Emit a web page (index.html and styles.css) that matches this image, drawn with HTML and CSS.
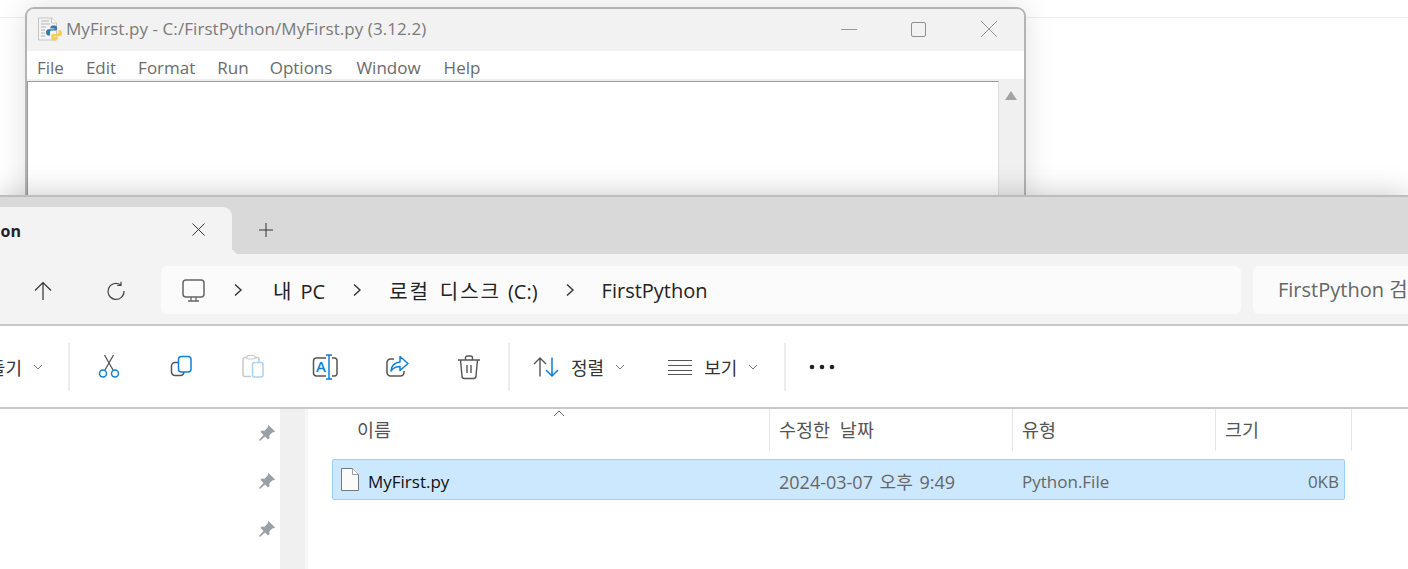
FILE: index.html
```html
<!DOCTYPE html>
<html lang="ko">
<head>
    <meta charset="UTF-8">
    <title>MyFirst.py</title>
    <link rel="stylesheet" href="styles.css">
</head>
<body>
    <div class="desk-line"></div>

    <!-- IDLE editor window, mostly hidden behind the explorer -->
    <div class="idle">
        <div class="idle-title">
            <svg class="idle-logo" width="26" height="24" viewBox="0 0 26 24">
                <path d="M1.500 1h13l5 5v17h-18z" fill="#f4f4f4" stroke="#c4c4c4"/>
                <path d="M14.500 1v5h5" fill="#fff" stroke="#c4c4c4"/>
                <path d="M4 4h8M4 7h9M4 10h5M4 13h4M4 16h4M4 19h4" stroke="#b4b4b4"/>
                <g transform="translate(3.500 2.500)">
                    <path d="M9.500 16v-3.500c0-1 .7-1.600 1.600-1.600h4.200c.8 0 1.300-.6 1.300-1.300V8.300c0-1.800-1.300-2.300-3.400-2.300-2.300 0-3.300.6-3.300 1.900V9H14v.7H8.200c-1.500 0-2.700 1-2.700 3 0 2.100 1 3.300 2.500 3.300z" fill="#3a76a8"/>
                    <path d="M10.800 17.500v1.300c0 1.500 1.300 2.200 3.200 2.200 2.200 0 3.300-.7 3.300-2V17.500H13.500v-.7h5.600c1.500 0 2.400-1.100 2.400-3s-.8-3.300-2.400-3.300H18v2.300c0 1-.7 1.700-1.700 1.700h-3.900c-.9 0-1.600.7-1.600 1.500z" fill="#f7cf4a"/>
                </g>
            </svg>
            <span class="idle-name">MyFirst.py - C:/FirstPython/MyFirst.py (3.12.2)</span>
            <div class="win-btns">
                <svg width="18" height="18" viewBox="0 0 18 18"><path d="M1 9.500h16" stroke="#9a9a9a" fill="none"/></svg>
                <svg width="18" height="18" viewBox="0 0 18 18"><rect x="1.500" y="2.500" width="14" height="14" rx="1.500" stroke="#8f8f8f" fill="none"/></svg>
                <svg width="18" height="18" viewBox="0 0 18 18"><path d="M1 1l16 16M17 1L1 17" stroke="#949494" fill="none"/></svg>
            </div>
        </div>
        <div class="idle-menu">
            <span>File</span><span>Edit</span><span>Format</span><span>Run</span><span>Options</span><span>Window</span><span>Help</span>
        </div>
        <div class="idle-body">
            <div class="idle-text"></div>
            <div class="idle-scroll"><div class="scroll-up"></div></div>
        </div>
    </div>

    <!-- File explorer window -->
    <div class="explorer">
        <div class="tabs">
            <div class="tab">
                <span class="tab-name">FirstPython</span>
                <svg class="tab-x" width="15" height="15" viewBox="0 0 15 15"><path d="M1.500 1.500l12 12M13.500 1.500l-12 12" stroke="#333" fill="none"/></svg>
            </div>
            <svg class="tab-plus" width="16" height="16" viewBox="0 0 16 16"><path d="M8 1v14M1 8h14" stroke="#333" fill="none"/></svg>
        </div>

        <div class="nav">
            <svg class="nav-up" width="18" height="20" viewBox="0 0 18 20"><path d="M9 19V1.500M1 9.500l8-8 8 8" stroke="#333" stroke-width="1.200" fill="none"/></svg>
            <svg class="nav-refresh" width="20" height="20" viewBox="0 0 20 20"><path d="M14.500 3.800A8 8 0 1 0 18 10M15 .8v3.700h-3.800" stroke="#444" stroke-width="1.200" fill="none"/></svg>
            <div class="address">
                <svg class="pc-icon" width="24" height="24" viewBox="0 0 24 24"><rect x="2" y="2" width="21" height="17" rx="3" stroke="#666" stroke-width="1.500" fill="#fbfbfb"/><path d="M10 19v4M15 19v4M7 23h11" stroke="#666" stroke-width="1.300" fill="none"/></svg>
                <svg class="crumb-arrow" width="10" height="14" viewBox="0 0 10 14"><path d="M2 1.500L8 7l-6 5.500" stroke="#333" stroke-width="1.400" fill="none"/></svg>
                <span class="crumb crumb-first"><span class="ko">내</span> PC</span>
                <svg class="crumb-arrow" width="10" height="14" viewBox="0 0 10 14"><path d="M2 1.500L8 7l-6 5.500" stroke="#333" stroke-width="1.400" fill="none"/></svg>
                <span class="crumb"><span class="ko">로컬 디스크</span> (C:)</span>
                <svg class="crumb-arrow" width="10" height="14" viewBox="0 0 10 14"><path d="M2 1.500L8 7l-6 5.500" stroke="#333" stroke-width="1.400" fill="none"/></svg>
                <span class="crumb">FirstPython</span>
            </div>
            <div class="search">FirstPython 검색</div>
        </div>

        <div class="toolbar">
            <div class="tool-new">
                <span class="tool-label">새로 만들기</span>
                <svg class="chev" width="10" height="6" viewBox="0 0 10 6"><path d="M1 1l4 4 4-4" stroke="#777" fill="none"/></svg>
            </div>
            <div class="tool-sep"></div>
            <div class="tool-icons">
                <div class="tool-icon">
                    <svg width="24" height="24" viewBox="0 0 24 24"><path d="M8 16L16.500 1M16 16L7.500 1" stroke="#555" stroke-width="1.300" fill="none"/><circle cx="6" cy="19.500" r="3.500" stroke="#0f7fd8" stroke-width="1.500" fill="none"/><circle cx="18" cy="19.500" r="3.500" stroke="#0f7fd8" stroke-width="1.500" fill="none"/></svg>
                </div>
                <div class="tool-icon">
                    <svg width="24" height="24" viewBox="0 0 24 24"><path d="M9 8.500H6a3.500 3.500 0 0 0-3.500 3.500v6A3.500 3.500 0 0 0 6 21.500h5.500a3.500 3.500 0 0 0 3.300-3.500" stroke="#555" stroke-width="1.500" fill="none"/><rect x="9.500" y="2.500" width="12.500" height="15.500" rx="3" stroke="#0f7fd8" stroke-width="1.500" fill="none"/></svg>
                </div>
                <div class="tool-icon">
                    <svg width="24" height="24" viewBox="0 0 24 24"><path d="M6 3.500H4A2 2 0 0 0 2 5.500v15A2 2 0 0 0 4 22.500h6M14 3.500h2A2 2 0 0 1 18 5.500V8" stroke="#c9c9c9" stroke-width="1.500" fill="none"/><rect x="6" y="1.500" width="8" height="3.500" rx="1.500" stroke="#c9c9c9" stroke-width="1.200" fill="none"/><rect x="11.500" y="8.500" width="10.500" height="14.500" rx="2" stroke="#a6d3f5" stroke-width="1.500" fill="none"/></svg>
                </div>
                <div class="tool-icon">
                    <svg width="26" height="26" viewBox="0 0 26 26"><path d="M14 4H4A3 3 0 0 0 1.500 7v12A3 3 0 0 0 4 22h10M20 4h2.500A2.500 2.500 0 0 1 25 7v12a2.500 2.500 0 0 1-2.500 3H20" stroke="#555" stroke-width="1.500" fill="none"/><path d="M17 1v24M14 1h6M14 25h6" stroke="#0f7fd8" stroke-width="1.500" fill="none"/><text x="4" y="18" class="rename-a">A</text></svg>
                </div>
                <div class="tool-icon">
                    <svg width="24" height="24" viewBox="0 0 24 24"><path d="M9 5H5.500A3.500 3.500 0 0 0 2 8.500v10A3.500 3.500 0 0 0 5.500 22h10a3.500 3.500 0 0 0 3.500-3.500V17" stroke="#555" stroke-width="1.500" fill="none"/><path d="M15 2.500l8 7-8 7v-4c-4 0-6.500 1-9 4.500 .5-5.500 3.500-8.500 9-9z" stroke="#0f7fd8" stroke-width="1.500" stroke-linejoin="round" fill="none"/></svg>
                </div>
                <div class="tool-icon">
                    <svg width="24" height="26" viewBox="0 0 24 26"><path d="M1 6h22M8.500 6V4a2 2 0 0 1 2-2h3a2 2 0 0 1 2 2v2M3.500 6l1.500 16a2.500 2.500 0 0 0 2.500 2.500h9a2.500 2.500 0 0 0 2.500-2.500L20.500 6M10 11v8M14 11v8" stroke="#555" stroke-width="1.400" fill="none"/></svg>
                </div>
            </div>
            <div class="tool-sep"></div>
            <div class="tool-menu tool-sort">
                <svg width="26" height="22" viewBox="0 0 26 22"><path d="M7 20.500V2M1 8l6-6 6 6" stroke="#555" stroke-width="1.400" fill="none"/><path d="M19 1.500V20M13 14l6 6 6-6" stroke="#0f7fd8" stroke-width="1.500" fill="none"/></svg>
                <span class="tool-label">정렬</span>
                <svg class="chev" width="10" height="6" viewBox="0 0 10 6"><path d="M1 1l4 4 4-4" stroke="#777" fill="none"/></svg>
            </div>
            <div class="tool-menu tool-view">
                <svg width="24" height="18" viewBox="0 0 24 18"><path d="M0 2.500h24M0 7.500h24M0 12.500h24M0 16.500h24" stroke="#555" stroke-width="1.200" fill="none"/></svg>
                <span class="tool-label">보기</span>
                <svg class="chev" width="10" height="6" viewBox="0 0 10 6"><path d="M1 1l4 4 4-4" stroke="#777" fill="none"/></svg>
            </div>
            <div class="tool-sep"></div>
            <svg class="tool-more" width="26" height="6" viewBox="0 0 26 6"><circle cx="3" cy="3" r="2.300" fill="#222"/><circle cx="13" cy="3" r="2.300" fill="#222"/><circle cx="23" cy="3" r="2.300" fill="#222"/></svg>
        </div>

        <div class="main">
            <div class="side">
                <div class="pin"><svg width="18" height="18" viewBox="0 0 18 18"><path d="M10.500 1l6.500 6.500-1.500 1-1-.3-3.200 3.300.2 2.500-1.500 1.500-3-3L2 17l-1-1 4.500-5-3-3L4 6.500l2.500.2L9.800 3.500l-.3-1z" fill="#9aa1a6"/></svg></div>
                <div class="pin"><svg width="18" height="18" viewBox="0 0 18 18"><path d="M10.500 1l6.500 6.500-1.500 1-1-.3-3.200 3.300.2 2.500-1.500 1.500-3-3L2 17l-1-1 4.500-5-3-3L4 6.500l2.500.2L9.800 3.500l-.3-1z" fill="#9aa1a6"/></svg></div>
                <div class="pin"><svg width="18" height="18" viewBox="0 0 18 18"><path d="M10.500 1l6.500 6.500-1.500 1-1-.3-3.200 3.300.2 2.500-1.500 1.500-3-3L2 17l-1-1 4.500-5-3-3L4 6.500l2.500.2L9.800 3.500l-.3-1z" fill="#9aa1a6"/></svg></div>
            </div>
            <div class="side-scroll"></div>
            <div class="list">
                <div class="list-head">
                    <div class="col col-name">이름
                        <svg class="sort-caret" width="12" height="7" viewBox="0 0 12 7"><path d="M1 6l5-5 5 5" stroke="#666" fill="none"/></svg>
                    </div>
                    <div class="col col-date">수정한 날짜</div>
                    <div class="col col-type">유형</div>
                    <div class="col col-size">크기</div>
                </div>
                <div class="file-row">
                    <div class="cell-name">
                        <svg width="18" height="23" viewBox="0 0 18 23"><path d="M.5.500h11l6 6v16H.5z" fill="#fbfbfb" stroke="#777"/><path d="M11.500.500v6h6" fill="#fff" stroke="#999"/></svg>
                        <span>MyFirst.py</span>
                    </div>
                    <div class="cell-date">2024-03-07 오후 9:49</div>
                    <div class="cell-type">Python.File</div>
                    <div class="cell-size">0KB</div>
                </div>
            </div>
        </div>
    </div>
</body>
</html>
```

FILE: styles.css
```css
html, body {
    margin: 0;
    padding: 0;
    height: 100%;
}
body {
    position: relative;
    overflow: hidden;
    background: #fff;
    font-family: "Open Sans", "Noto Sans CJK KR", sans-serif;
    color: #222;
}
.desk-line {
    height: 17px;
    border-bottom: 1px solid #eee;
}

/* idle window */
.idle {
    position: absolute;
    left: 25px;
    top: 7px;
    width: 1001px;
    height: 200px;
    box-sizing: border-box;
    border: 2px solid #b4b4b4;
    border-bottom: none;
    border-radius: 9px 9px 0 0;
    background: #f0f0f0;
    box-shadow: 0 0 30px rgba(0, 0, 0, 0.12);
    display: flex;
    flex-direction: column;
}
.idle-title {
    height: 42px;
    flex: none;
    box-sizing: border-box;
    padding: 0 0 3px 10px;
    display: flex;
    align-items: center;
    background: #f2f2f2;
    border-radius: 7px 7px 0 0;
}
.idle-logo {
    margin-right: 3px;
}
.idle-name {
    font-size: 17px;
    letter-spacing: 0.07px;
    color: #7a7a7a;
    white-space: nowrap;
}
.win-btns {
    margin-left: auto;
    margin-right: 26px;
    display: flex;
    gap: 52px;
}
.idle-menu {
    height: 28px;
    flex: none;
    background: #fff;
    display: flex;
    align-items: center;
    gap: 22px;
    padding-left: 10px;
    font-size: 17px;
    color: #6b6b6b;
    padding-top: 4px;
    box-sizing: border-box;
}
.idle-menu span:nth-child(5) {
    margin-left: -1px;
}
.idle-menu span:nth-child(6) {
    margin-left: 2px;
}
.idle-menu span:nth-child(7) {
    margin-left: 1px;
}
.idle-body {
    flex: 1;
    display: flex;
    padding-top: 2px;
}
.idle-text {
    width: 970px;
    background: #fff;
    border-top: 1px solid #9a9a9a;
    border-left: 1px solid #9a9a9a;
    border-right: 1px solid #ddd;
}
.idle-scroll {
    flex: 1;
    padding: 10px 0 0 6px;
}
.scroll-up {
    width: 0;
    height: 0;
    border-left: 6px solid transparent;
    border-right: 6px solid transparent;
    border-bottom: 9px solid #a3a3a3;
}

/* explorer */
.explorer {
    position: absolute;
    left: 0;
    top: 195px;
    width: 100%;
    bottom: 0;
    border-top: 2px solid #bdbdbd;
    background: #fff;
    box-shadow: 0 0 28px rgba(0, 0, 0, 0.22);
    display: flex;
    flex-direction: column;
}
.tabs {
    height: 57px;
    flex: none;
    box-sizing: border-box;
    padding-top: 10px;
    background: #d9d9d9;
    display: flex;
    align-items: flex-start;
    overflow: hidden;
}
.tab {
    position: relative;
    width: 232px;
    height: 47px;
    flex: none;
    box-sizing: border-box;
    background: #f3f3f3;
    border-radius: 0 9px 0 0;
    display: flex;
    justify-content: flex-end;
    align-items: center;
    padding-right: 26px;
}
.tab::after {
    content: "";
    position: absolute;
    left: 100%;
    bottom: 0;
    width: 8px;
    height: 8px;
    border-bottom-left-radius: 8px;
    box-shadow: -4px 4px 0 #f3f3f3;
}
.tab-name {
    flex: none;
    font-size: 16px;
    font-weight: 700;
    color: #222;
    margin-right: 170px;
}
.tab-x {
    flex: none;
    margin-top: -3px;
}
.tab-plus {
    margin: 15px 0 0 26px;
}
.nav {
    height: 72px;
    flex: none;
    box-sizing: border-box;
    background: #f3f3f3;
    border-bottom: 2px solid #c8c8c8;
    padding: 12px 0 0 34px;
    display: flex;
    align-items: flex-start;
}
.nav-up {
    margin-top: 15px;
}
.nav-refresh {
    margin: 15px 35px 0 54px;
}
.address {
    width: 1080px;
    height: 48px;
    flex: none;
    background: #fbfbfb;
    border-radius: 6px;
    display: flex;
    align-items: center;
    padding-left: 20px;
    box-sizing: border-box;
    font-size: 20px;
    color: #222;
    white-space: nowrap;
}
.pc-icon {
    margin-right: 28px;
}
.crumb {
    margin: 0 27px;
    word-spacing: 2px;
}
.crumb-first {
    margin-left: 30px;
}
.ko {
    letter-spacing: 1.900px;
    word-spacing: 3px;
}
.search {
    margin-left: 12px;
    height: 48px;
    flex: 1;
    border-radius: 6px 0 0 6px;
    background: #fbfbfb;
    padding-left: 25px;
    font-size: 20px;
    line-height: 48px;
    color: #666;
    white-space: nowrap;
    overflow: hidden;
}
.toolbar {
    height: 83px;
    flex: none;
    box-sizing: border-box;
    border-bottom: 2px solid #c8c8c8;
    display: flex;
    align-items: center;
}
.tool-new {
    width: 68px;
    flex: none;
    box-sizing: border-box;
    padding-right: 25px;
    display: flex;
    justify-content: flex-end;
    align-items: center;
}
.tool-label {
    flex: none;
    font-size: 18px;
    color: #333;
    white-space: nowrap;
}
.chev {
    flex: none;
    margin-left: 11px;
}
.tool-sep {
    width: 2px;
    height: 48px;
    flex: none;
    background: #ececec;
}
.tool-icons {
    display: flex;
    margin: 0 3px;
}
.tool-icon {
    width: 72px;
    flex: none;
    display: flex;
    justify-content: center;
}
.rename-a {
    font-size: 15px;
    font-weight: 600;
    font-family: "Open Sans", sans-serif;
    fill: #0f7fd8;
}
.tool-menu {
    display: flex;
    align-items: center;
}
.tool-menu .tool-label {
    margin-left: 12px;
}
.tool-sort {
    padding-left: 23px;
}
.tool-view {
    padding-left: 43px;
    padding-right: 26px;
}
.tool-more {
    margin-left: 23px;
}
.main {
    flex: 1;
    display: flex;
    min-height: 0;
}
.side {
    width: 280px;
    flex: none;
}
.pin {
    height: 48px;
    display: flex;
    align-items: center;
    padding-left: 258px;
}
.side-scroll {
    width: 25px;
    flex: none;
    background: #f0f0f0;
    border-right: 3px solid #f6f6f6;
}
.list {
    flex: 1;
    padding-left: 24px;
}
.list-head {
    height: 42px;
    width: 1019px;
    margin-left: 1px;
    display: grid;
    grid-template-columns: 437px 243px 203px 136px;
    font-size: 18.500px;
    color: #555;
}
.col {
    padding-left: 9px;
    border-right: 1px solid #e5e5e5;
    line-height: 42px;
    white-space: nowrap;
}
.col-name {
    position: relative;
    padding-left: 24px;
}
.sort-caret {
    position: absolute;
    left: 220px;
    top: 1px;
}
.col-date {
    word-spacing: 5px;
}
.file-row {
    margin-top: 8px;
    height: 41px;
    width: 1013px;
    box-sizing: border-box;
    padding-top: 3px;
    background: #cce8ff;
    border: 1px solid #99d1ff;
    border-radius: 2px;
    display: grid;
    grid-template-columns: 437px 243px 1fr 60px;
    align-items: center;
    font-size: 17px;
    color: #666;
}
.cell-name {
    display: flex;
    align-items: center;
    padding-left: 8px;
    margin-top: -3px;
    color: #111;
}
.cell-name span {
    margin-left: 9px;
    margin-top: 3px;
}
.cell-date {
    padding-left: 9px;
    font-size: 18px;
    word-spacing: 2px;
    white-space: nowrap;
}
.cell-type {
    padding-left: 9px;
}
.cell-size {
    text-align: right;
    padding-right: 5px;
}
```
